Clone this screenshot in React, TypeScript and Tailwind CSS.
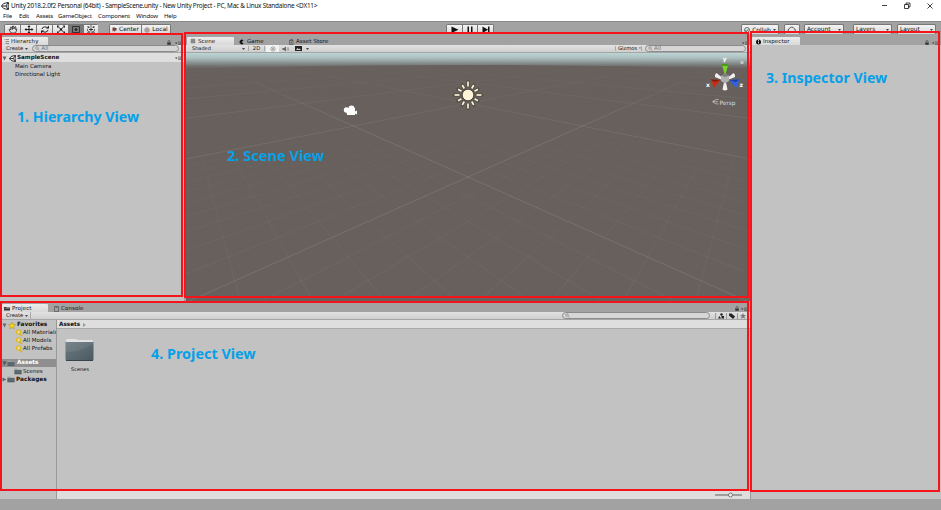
import type { ReactNode } from "react";

const UI = "font-['DejaVu_Sans',sans-serif] text-[5.5px] leading-none whitespace-nowrap text-[#111]";

function UnityLogo({ size }: { size: number }) {
  return (
    <svg width={size} height={size} viewBox="0 0 16 16" fill="none" stroke="#111" strokeWidth="1.8">
      <path d="M9.500 2 14.500 1l1 4.500M14.500 1 10 8H1.500M10 8l4.500 7M1 8l4-4.700L9.500 2M1 8l4 4.700 4.500 1.300M15 5.500l-1 2.500 1 2.500M14.500 15l-5-1M14.500 15l1-4.500" />
    </svg>
  );
}

function Lock() {
  return (
    <svg width="4" height="5" viewBox="0 0 8 10">
      <path d="M2 5V3a2 2 0 0 1 4 0v2" fill="none" stroke="#444" strokeWidth="1.3" />
      <path d="M.5 5h7v4.5h-7z" fill="#333" />
    </svg>
  );
}

function PaneMenu() {
  return (
    <svg width="6" height="4" viewBox="0 0 12 8">
      <path d="M0 3h5L2.5 6z" fill="#333" />
      <path d="M6 2h6M6 4.5h6M6 7h6" stroke="#444" strokeWidth="1.1" />
    </svg>
  );
}

function Caret() {
  return (
    <svg width="3" height="2" viewBox="0 0 6 4">
      <path d="M0 0h6L3 4z" fill="#444" />
    </svg>
  );
}

function Triangle({ open, light }: { open?: boolean; light?: boolean }) {
  return (
    <svg width="5" height="5" viewBox="0 0 10 10" className="shrink-0">
      <path d={open ? "M1 1h8L5 9z" : "M1 1v8l8-4z"} fill={light ? "#555" : "#666"} />
    </svg>
  );
}

function Folder() {
  return (
    <svg width="8" height="6.4" viewBox="0 0 20 16" className="shrink-0">
      <path d="M1 1.5h7l1 2h10V15H1z" fill="#9aa3a5" />
      <path d="M1 5h18v10H1z" fill="#5b6a70" />
      <path d="M1 15.2h18" stroke="#3c474b" />
    </svg>
  );
}

function Search({ wide, text }: { wide: string; text?: string }) {
  return (
    <div className={`flex h-[7px] items-center rounded-full border border-[#8b8b8b] bg-[#d6d6d6] pl-[2px] ${wide}`}>
      <svg width="6" height="5" viewBox="0 0 12 10" fill="none" stroke="#777" strokeWidth="1.1">
        <circle cx="4" cy="4" r="2.7" />
        <path d="m6 6 3 3" />
      </svg>
      {text && <span className="text-[5.8px] text-[#777]">{text}</span>}
    </div>
  );
}

function Tool({ children, active, wide = "w-[16px]" }: { children: ReactNode; active?: boolean; wide?: string }) {
  return (
    <div
      className={`flex h-[12px] shrink-0 items-start justify-center border-t border-r border-[#777] ${wide} ${
        active ? "bg-[#777]" : "bg-linear-to-b from-[#f4f4f4] to-[#cfcfcf]"
      }`}
    >
      {children}
    </div>
  );
}

function Tab({ children, active, wide }: { children: ReactNode; active?: boolean; wide: string }) {
  return (
    <div
      className={`flex h-[8px] items-center gap-[2px] pt-px pl-[3px] tracking-[0.1px] ${wide} ${
        active ? "rounded-t-[1px] bg-linear-to-b from-[#ececec] to-[#d8d8d8]" : ""
      }`}
    >
      {children}
    </div>
  );
}

const BAR = "flex h-[8px] shrink-0 items-center border-b border-[#a5a5a5] bg-linear-to-b from-[#e2e2e2] to-[#cfcfcf]";

/* Ground plane grid: unit cell (i, j) projected to the viewport. */
function project(i: number, j: number): [number, number] {
  const v = (i + j) / 2;
  const u = (i - j) / 2;
  const d = 1 - v * 0.1257;
  return [282 + (37.3 * u) / d, 124 + (16.6 * v) / d];
}

function GridLines({ major }: { major: boolean }) {
  const out: ReactNode[] = [];
  const span = major ? 300 : 60;
  for (let i = -span; i <= 60; i++) {
    if ((i % 10 === 0) !== major) continue;
    const end = Math.min(60, 15 - i - 0.2);
    const [x1, y1] = project(i, -span);
    const [x2, y2] = project(i, end);
    const op = major ? (i === 0 ? 0.22 : 0.17) : 0.1;
    out.push(<line key={`a${i}`} x1={x1} y1={y1} x2={x2} y2={y2} strokeOpacity={op} />);
    out.push(<line key={`b${i}`} x1={564 - x1} y1={y1} x2={564 - x2} y2={y2} strokeOpacity={op} />);
  }
  return <>{out}</>;
}

function SceneCanvas() {
  return (
    <svg width="564" height="248" viewBox="0 0 564 248" className="block shrink-0">
      <defs>
        <linearGradient id="sky" x1="0" y1="0" x2="0" y2="1">
          <stop offset="0" stopColor="#bcd5d5" />
          <stop offset="0.3" stopColor="#adc1c1" />
          <stop offset="0.6" stopColor="#8a9393" />
          <stop offset="0.85" stopColor="#6f6d6b" />
          <stop offset="1" stopColor="#67605c" />
        </linearGradient>
        <linearGradient id="fadeMinor" gradientUnits="userSpaceOnUse" x1="0" y1="35" x2="0" y2="220">
          <stop offset="0" stopColor="#000" />
          <stop offset="0.45" stopColor="#888" />
          <stop offset="1" stopColor="#fff" />
        </linearGradient>
        <linearGradient id="fadeMajor" gradientUnits="userSpaceOnUse" x1="0" y1="9" x2="0" y2="75">
          <stop offset="0" stopColor="#000" />
          <stop offset="1" stopColor="#fff" />
        </linearGradient>
        <mask id="minor" maskUnits="userSpaceOnUse" x="0" y="0" width="564" height="248">
          <rect width="564" height="248" fill="url(#fadeMinor)" />
        </mask>
        <mask id="major" maskUnits="userSpaceOnUse" x="0" y="0" width="564" height="248">
          <rect width="564" height="248" fill="url(#fadeMajor)" />
        </mask>
      </defs>
      <rect width="564" height="248" fill="#67605c" />
      <path d="M0 0h564v16Q282 8 0 16z" fill="url(#sky)" />
      <g stroke="#c4cbc8" strokeWidth="0.8">
        <g mask="url(#minor)"><GridLines major={false} /></g>
        <g mask="url(#major)"><GridLines major /></g>
      </g>
      {/* camera gizmo */}
      <g fill="#fff">
        <circle cx="160.5" cy="57" r="2.7" />
        <circle cx="165.5" cy="55.5" r="3" />
        <path d="M160 55h9v3.500l2-1v4l-2-1v1.500h-8z" />
      </g>
      {/* directional light gizmo */}
      <g stroke="#4d4841" strokeWidth="3.2" strokeLinecap="round">
        {Array.from({ length: 12 }, (_, k) => (
          <line key={k} x1="282" x2="282" y1={k % 3 ? 34 : 33} y2={k % 3 ? 30.5 : 28.5} transform={`rotate(${k * 30} 282 42)`} />
        ))}
      </g>
      <g stroke="#fdf3d7" strokeWidth="1.7">
        {Array.from({ length: 12 }, (_, k) => (
          <line key={k} x1="282" x2="282" y1={k % 3 ? 34.5 : 33.5} y2={k % 3 ? 30.5 : 28.5} transform={`rotate(${k * 30} 282 42)`} />
        ))}
      </g>
      <circle cx="282" cy="42" r="5.8" fill="#fdf3d7" stroke="#4d4841" />
      {/* orientation gizmo */}
      <path d="M536 24.500l-5.500-4.500q-2 1-1.500 4l6 2.500z M542 24.500l5.500-4.500q2 1 1.500 4l-6 2.500z M538.500 27l-2 9.500q2.500 2 5 0l-2-9.500z" fill="#f1f1f1" />
      <path d="M535.800 11h6.600l-2.800 10h-1z" fill="#77d62b" />
      <path d="M535.800 11h6.600l-.5 2h-5.600z" fill="#4d9a19" />
      <path d="M524.500 26.500l10 .5-6.500 8z" fill="#c22f15" />
      <path d="M524.500 26.500l10 .5-6 2z" fill="#7d1b0c" />
      <path d="M553.500 26.500l-10 .5 6.500 8z" fill="#2d62e4" />
      <path d="M553.500 26.500l-10 .5 6 2z" fill="#173d9d" />
      <path d="m535 22.500 4-1.500 4 1.500v5.500l-4 2.500-4-2.500z" fill="#b0b0b0" />
      <path d="m535 22.500 4 1.500 4-1.500-4-1.500z" fill="#7c7c7c" />
      <g fill="#fff" fontFamily="DejaVu Sans, sans-serif" fontSize="6" fontWeight="bold">
        <text x="536.8" y="8">y</text>
        <text x="520" y="33.5">x</text>
        <text x="553.5" y="33.5">z</text>
      </g>
      <path d="M532.500 46.500h-2.500l-3.500 2.200 3.500 2.200h2.500M527 48.700h5" stroke="#ddd" strokeWidth=".6" fill="none" />
      <text x="533.5" y="51.5" fill="#ddd" fontFamily="DejaVu Sans, sans-serif" fontSize="5.8">Persp</text>
      <path d="M554.500 8h3v3h-3z" fill="#d4dede" fillOpacity=".7" />
    </svg>
  );
}

function TitleBar() {
  return (
    <header className="flex h-[21px] shrink-0 flex-col bg-white font-['Noto_Sans',sans-serif] text-[#111]">
      <div className="flex h-[11px] items-center pl-px">
        <UnityLogo size={8} />
        <span className="ml-[2px] pt-px text-[6.4px] leading-none tracking-[-0.235px] whitespace-nowrap">
          Unity 2018.2.0f2 Personal (64bit) - SampleScene.unity - New Unity Project - PC, Mac &amp; Linux Standalone &lt;DX11&gt;
        </span>
        <svg width="54" height="8" viewBox="0 0 54 8" className="mr-[6px] ml-auto" fill="none" stroke="#111" strokeWidth=".8">
          <path d="M1 3.500h5M23.500 2.500h4v4h-4zM25 2.500V1h4v4h-1.500M46.500 1.500l5 5M51.500 1.500l-5 5" />
        </svg>
      </div>
      <nav className="flex h-[10px] items-center pl-[3px] text-[6.1px] leading-none tracking-[-0.2px] whitespace-nowrap">
        <span className="w-[16px]">File</span>
        <span className="w-[17px]">Edit</span>
        <span className="w-[22px]">Assets</span>
        <span className="w-[40px]">GameObject</span>
        <span className="w-[38px]">Component</span>
        <span className="w-[28px]">Window</span>
        <span>Help</span>
      </nav>
    </header>
  );
}

const I = { width: 10, height: 9, viewBox: "0 0 20 18", fill: "none", stroke: "#222", strokeWidth: 2 };

function Toolbar() {
  return (
    <div className={`flex h-[13px] shrink-0 items-start overflow-hidden border-t border-[#8b8b8b] bg-[#a2a2a2] pt-[2px] ${UI}`}>
      <div className="ml-[4px] flex w-[94px] overflow-hidden rounded-t-[2px] border-l border-[#777]">
        <Tool>
          <svg {...I} strokeWidth={1.5}><path d="M6 16 2 9l2-1 2 2-1-6h2l2 5V2h2l1 6 2-5 2 1-1 5 3-1-3 8z" /></svg>
        </Tool>
        <Tool>
          <svg {...I}><path d="M10 2v14M2 9h16" /><path d="m7 4 3-4 3 4zM7 14l3 4 3-4zM5 6 1 9l4 3zM15 6l4 3-4 3z" fill="#222" stroke="none" /></svg>
        </Tool>
        <Tool>
          <svg {...I}><path d="M15 6A6 5 0 0 0 4 8M5 12a6 5 0 0 0 11-2" /><path d="M12 7h6V1zM8 11H2v6z" fill="#222" stroke="none" /></svg>
        </Tool>
        <Tool>
          <svg {...I}><path d="m4 3 12 12M16 3 4 15" /><path d="M2 1h5L2 6zM18 1h-5l5 5zM2 17h5l-5-5zM18 17h-5l5-5zM8 7h4v4H8z" fill="#222" stroke="none" /></svg>
        </Tool>
        <Tool active wide="w-[15px]">
          <svg {...I} strokeWidth={1.6}><path d="M3 3h14v12H3z" /><circle cx="10" cy="9" r="2" fill="#222" /></svg>
        </Tool>
        <Tool wide="w-[15px]">
          <svg {...I} strokeWidth={1.8}><circle cx="10" cy="9" r="7" strokeDasharray="4 2" /><path d="M10 5v8M6 9h8M3 2l4 4M17 2l-4 4M3 16l4-4M17 16l-4-4" /></svg>
        </Tool>
      </div>
      <div className="ml-[11px] flex overflow-hidden rounded-t-[2px] border-l border-[#777]">
        <Tool wide="w-[32px]">
          <div className="flex items-center gap-[2px] pt-[2px]">
            <svg width="5" height="6" viewBox="0 0 10 12"><path d="M1 1v8l3-2 2 4V1z" fill="#7a3f3f" /><path d="M6 2h3v5H6z" fill="#444" /></svg>
            <span className="text-[5.9px]">Center</span>
          </div>
        </Tool>
        <Tool wide="w-[29px]">
          <div className="flex items-center gap-[2px] pt-[2px]">
            <svg width="6" height="6" viewBox="0 0 12 12" fill="none" stroke="#644"><circle cx="6" cy="6" r="4.5" /><path d="M2 6h8M6 2v8" /></svg>
            <span className="text-[5.9px]">Local</span>
          </div>
        </Tool>
      </div>
      <div className="ml-[275px] flex overflow-hidden rounded-t-[2px] border-l border-[#777]">
        <Tool><svg {...I}><path d="M3 3v13l14-6.500z" fill="#111" stroke="none" /></svg></Tool>
        <Tool wide="w-[15px]"><svg {...I}><path d="M5 3h3v13H5zM12 3h3v13h-3z" fill="#111" stroke="none" /></svg></Tool>
        <Tool><svg {...I}><path d="M3 3v13l11-6.500zM14 3h3v13h-3z" fill="#111" stroke="none" /></svg></Tool>
      </div>
      <div className="mr-[5px] ml-auto flex overflow-hidden">
        <Tool wide="w-[38px] rounded-t-[2px] border-l">
          <div className="flex items-center gap-[2px] pt-[2px]">
            <svg width="6" height="6" viewBox="0 0 12 12" fill="none" stroke="#333" strokeWidth="1.3"><circle cx="6" cy="6" r="5" /><path d="m3 6 2 3 4-5" /></svg>
            <span className="text-[6px]">Collab</span>
            <Caret />
          </div>
        </Tool>
        <Tool wide="ml-[5px] w-[16px] rounded-t-[2px] border-l">
          <svg {...I} strokeWidth={1.5}><path d="M4 14a4 4 0 0 1 1-7 5 5 0 0 1 9 0 4 4 0 0 1 1 7z" /></svg>
        </Tool>
        {[
          { name: "Account", cls: "ml-[4px] w-[40px] rounded-t-[2px] border-l" },
          { name: "Layers", cls: "ml-[9px] w-[39px] rounded-t-[2px] border-l" },
          { name: "Layout", cls: "ml-[5px] w-[39px] rounded-t-[2px] border-l" },
        ].map((b) => (
          <Tool key={b.name} wide={b.cls}>
            <div className="flex w-full items-center justify-between px-[2px] pt-[2px]">
              <span className="text-[5.8px]">{b.name}</span>
              <Caret />
            </div>
          </Tool>
        ))}
      </div>
    </div>
  );
}

function Hierarchy() {
  return (
    <section className={`flex w-[184px] shrink-0 flex-col bg-[#c2c2c2] ${UI}`}>
      <div className="flex h-[11px] shrink-0 items-end bg-[#a2a2a2] pl-[2px]">
        <Tab active wide="w-[46px]">
          <svg width="5" height="5" viewBox="0 0 10 10" stroke="#555" strokeWidth="1.2" className="-ml-px"><path d="M1 1h2M4 1h6M3 5h7M3 9h7" /></svg>
          Hierarchy
        </Tab>
        <div className="mr-[3px] ml-auto flex items-end gap-[4px]"><Lock /><PaneMenu /></div>
      </div>
      <div className={BAR}>
        <span className="mr-[2px] ml-[6px] text-[5.2px]">Create</span><Caret />
        <div className="ml-[4px]"><Search wide="w-[147px]" text="All" /></div>
      </div>
      <div className="flex h-[9px] shrink-0 items-center bg-[#dedede] pt-px pr-[3px] pl-[2px] text-[5.6px] font-bold">
        <Triangle open /><span className="mr-px ml-[2px]"><UnityLogo size={7} /></span>SampleScene
        <span className="ml-auto"><PaneMenu /></span>
      </div>
      <div className="flex h-[8px] items-center pt-px pl-[15px]">Main Camera</div>
      <div className="flex h-[8px] items-center pt-px pl-[15px]">Directional Light</div>
    </section>
  );
}

function Scene() {
  return (
    <section className={`flex w-[566px] shrink-0 flex-col bg-[#a2a2a2] pl-[2px] ${UI}`}>
      <div className="flex h-[11px] shrink-0 items-end pl-px">
        <Tab active wide="w-[47px]">
          <svg width="6" height="6" viewBox="0 0 12 12" stroke="#333" strokeWidth="1.2" className="-mt-px"><path d="M4 1v10M8 1v10M1 4h10M1 8h10" /></svg>
          Scene
        </Tab>
        <Tab wide="w-[50px]">
          <svg width="5" height="6" viewBox="0 0 10 12" className="mr-px ml-[2px]"><path d="M9 3A4.500 4.500 0 1 0 9 9L5 6z" fill="#111" /></svg>
          Game
        </Tab>
        <Tab wide="w-[50px]">
          <svg width="5" height="6" viewBox="0 0 10 12" fill="none" stroke="#333" className="ml-[2px]"><path d="M1 3h7v8H1zM3 3V1h4v2M3 6h3M3 8h3" /></svg>
          Asset Store
        </Tab>
        <div className="mr-[2px] ml-auto"><PaneMenu /></div>
      </div>
      <div className={`${BAR} text-[5.2px]`}>
        <div className="ml-[6px] flex w-[57px] items-center justify-between border-r border-[#aaa] pr-[3px] text-[5px]">Shaded<Caret /></div>
        <span className="w-[16px] border-r border-[#aaa] text-center">2D</span>
        <div className="ml-px flex h-[7px] w-[13px] items-center justify-center bg-[#f2f2f2]">
          <svg width="6" height="6" viewBox="0 0 12 12" stroke="#555"><circle cx="6" cy="6" r="2" fill="none" /><path d="M6 0v3M6 9v3M0 6h3M9 6h3M2 2l2 2M8 8l2 2M10 2 8 4M4 8l-2 2" /></svg>
        </div>
        <svg width="7" height="6" viewBox="0 0 14 12" className="ml-[3px]"><path d="M1 4h3l4-3v10L4 8H1z" fill="#666" /><path d="M10 3q2 3 0 6M12 2q3 4 0 8" stroke="#777" fill="none" /></svg>
        <svg width="7" height="5" viewBox="0 0 14 10" className="mr-[4px] ml-[6px]"><path d="M0 0h14v10H0z" fill="#222" /><path d="m2 8 3-4 2 2 2-1 3 3z" fill="#ccc" /></svg>
        <Caret />
        <div className="ml-auto flex w-[27px] items-center gap-[2px] border-x border-[#aaa] pl-[2px]">Gizmos<Caret /></div>
        <div className="mr-[4px] ml-[3px]"><Search wide="w-[101px]" text="All" /></div>
      </div>
      <SceneCanvas />
    </section>
  );
}

function Project() {
  return (
    <section className={`flex h-[198px] w-[750px] shrink-0 flex-col bg-[#c2c2c2] ${UI}`}>
      <div className="flex h-[11px] shrink-0 items-end bg-[#a2a2a2] pl-[2px]">
        <Tab active wide="w-[46px]">
          <svg width="6" height="5" viewBox="0 0 12 10" className="-ml-px"><path d="M0 2h4l1 1h7v6H0z" fill="#333" /><path d="M1 5h10" stroke="#aaa" /></svg>
          Project
        </Tab>
        <Tab wide="w-[50px]">
          <svg width="5" height="6" viewBox="0 0 10 12" fill="none" stroke="#333" className="ml-[3px]"><path d="M1 1h8v10H1z" /><path d="M3 3h4" /></svg>
          Console
        </Tab>
        <div className="mr-[3px] ml-auto flex items-end gap-[2px] pb-px"><Lock /><PaneMenu /></div>
      </div>
      <div className={BAR}>
        <span className="mr-[2px] ml-[6px] text-[5.2px]">Create</span><Caret />
        <span className="ml-[2px] h-full w-px bg-[#aaa]" />
        <div className="ml-auto"><Search wide="w-[148px]" /></div>
        <div className="mr-[2px] ml-[5px] flex items-center">
          <span className="flex w-[11px] justify-center border-l border-[#999]">
            <svg width="6" height="6" viewBox="0 0 12 12" fill="#222"><circle cx="7" cy="3" r="2.5" /><path d="m0 11 3-5 3 5zM7 6h5v5H7z" /></svg>
          </span>
          <span className="flex w-[11px] justify-center border-l border-[#999]">
            <svg width="6" height="6" viewBox="0 0 12 12" fill="#222"><path d="M0 1h5l7 6-4 5-8-7z" /></svg>
          </span>
          <span className="flex w-[11px] justify-center border-l border-[#999]">
            <svg width="6" height="6" viewBox="0 0 12 12" fill="#777"><path d="m6 0 1.700 4H12L8.500 7 10 12 6 9l-4 3 1.500-5L0 4h4.300z" /></svg>
          </span>
        </div>
      </div>
      <div className="flex min-h-0 flex-1">
        <aside className="flex w-[57px] shrink-0 flex-col overflow-hidden border-r border-[#999] pt-px">
          <div className="flex h-[8px] shrink-0 items-center gap-px pl-[2px] text-[5.8px] font-bold">
            <Triangle open />
            <svg width="8" height="7" viewBox="0 0 16 15"><path d="m8 .5 2.300 4.700 5.200.6-3.900 3.500 1.200 5.200L8 12l-4.800 2.500 1.200-5.200L.5 5.800l5.200-.6z" fill="#f7d51c" stroke="#a98a08" /></svg>
            Favorites
          </div>
          {["All Materials", "All Models", "All Prefabs"].map((t) => (
            <div key={t} className="flex h-[8px] shrink-0 items-center pl-[15px] tracking-[0.05px]">
              <svg width="8" height="8" viewBox="0 0 16 16" fill="none" className="shrink-0"><circle cx="7" cy="6" r="4.5" fill="#e0d5a0" stroke="#dbb400" strokeWidth="2" /><path d="m10 10 4 4" stroke="#dbb400" strokeWidth="3" /></svg>
              {t}
            </div>
          ))}
          <div className="mt-[6px] flex h-[8px] shrink-0 items-center bg-[#8f8f8f] pl-[2px] text-[5.8px] font-bold text-white"><Triangle open light /><span className="mr-[2px]"><Folder /></span>Assets</div>
          <div className="flex h-[8px] shrink-0 items-center gap-px pt-px pl-[14px]"><Folder />Scenes</div>
          <div className="flex h-[8px] shrink-0 items-center pt-px pl-[2px] text-[5.8px] font-bold"><Triangle /><span className="mr-px"><Folder /></span>Packages</div>
        </aside>
        <div className="flex flex-1 flex-col">
          <div className="flex h-[9px] shrink-0 items-center gap-[3px] border-b border-[#aaa] bg-[#dedede] pt-px pl-[2px] text-[5.7px] font-bold">
            Assets
            <svg width="3" height="4" viewBox="0 0 6 8"><path d="M0 0v8l6-4z" fill="#999" /></svg>
          </div>
          <div className="mt-[8px] ml-[8px] flex w-[30px] flex-col items-center">
            <svg width="29" height="25" viewBox="0 0 29 25" className="-ml-px">
              <defs>
                <linearGradient id="fold" x1="0" y1="0" x2="1" y2="1">
                  <stop offset="0" stopColor="#6d7b81" /><stop offset="1" stopColor="#4b5a61" />
                </linearGradient>
              </defs>
              <path d="M1 5V3.500Q1 2 2.500 2h8Q12 2 12.500 3H27q1 0 1 2z" fill="#dfe3e3" />
              <path d="M.5 5h28v17q0 1.500-1.500 1.500H2Q.5 23.500.5 22z" fill="url(#fold)" />
              <path d="M.5 15q14 0 28-8V5H.5z" fill="#fff" fillOpacity=".07" />
              <path d="M1 23.500h27" stroke="#38444a" />
            </svg>
            <span className="mt-[5px] text-[5.1px]">Scenes</span>
          </div>
          <div className="mt-auto flex h-[8px] shrink-0 items-center justify-end bg-[#dedede] pr-[8px]">
            <svg width="27" height="6" viewBox="0 0 27 6"><path d="M0 3h27" stroke="#888" strokeWidth="1.5" /><circle cx="15.5" cy="3" r="2" fill="#eee" stroke="#777" /></svg>
          </div>
        </div>
      </div>
    </section>
  );
}

function Inspector() {
  return (
    <section className={`flex flex-1 flex-col border-l border-[#999] bg-[#c2c2c2] ${UI}`}>
      <div className="flex h-[11px] shrink-0 items-end bg-[#a2a2a2] pl-px">
        <Tab active wide="w-[48px]">
          <svg width="5" height="6" viewBox="0 0 10 12" className="ml-px"><circle cx="5" cy="6" r="5" fill="#111" /><path d="M5 2v2M5 5v4" stroke="#fff" strokeWidth="1.5" /></svg>
          Inspector
        </Tab>
        <div className="mr-[3px] ml-auto flex items-end gap-[3px]"><Lock /><PaneMenu /></div>
      </div>
    </section>
  );
}

const NOTE = "absolute font-['Noto_Sans',sans-serif] leading-[18px] font-bold whitespace-nowrap text-[#06a0e8]";

/* Red frames and blue captions laid over the editor. */
function Annotations() {
  return (
    <div className="pointer-events-none absolute inset-0">
      <div className="absolute top-[33px] left-0 h-[264px] w-[183px] border-2 border-[#f5131c]" />
      <div className="absolute top-[32px] left-[184px] h-[266px] w-[565px] border-2 border-[#f5131c]" />
      <div className="absolute top-[31px] left-[750px] h-[461px] w-[190px] border-2 border-[#f5131c]" />
      <div className="absolute top-[301px] left-0 h-[190px] w-[749px] border-2 border-[#f5131c]" />
      <span className={`${NOTE} top-[108px] left-[17px] text-[14.2px]`}>1. Hierarchy View</span>
      <span className={`${NOTE} top-[146px] left-[227px] text-[14.6px]`}>2. Scene View</span>
      <span className={`${NOTE} top-[69px] left-[766px] text-[14.2px]`}>3. Inspector View</span>
      <span className={`${NOTE} top-[345px] left-[151px] text-[14.4px]`}>4. Project View</span>
    </div>
  );
}

export default function App() {
  return (
    <div className="relative flex h-[510px] w-[941px] flex-col overflow-hidden bg-[#a2a2a2]">
      <TitleBar />
      <Toolbar />
      <main className="flex h-[465px] shrink-0">
        <div className="flex w-[750px] shrink-0 flex-col">
          <div className="flex h-[267px] shrink-0 overflow-hidden">
            <Hierarchy />
            <Scene />
          </div>
          <Project />
        </div>
        <Inspector />
      </main>
      <footer className="flex-1 bg-[#a2a2a2]" />
      <Annotations />
    </div>
  );
}
